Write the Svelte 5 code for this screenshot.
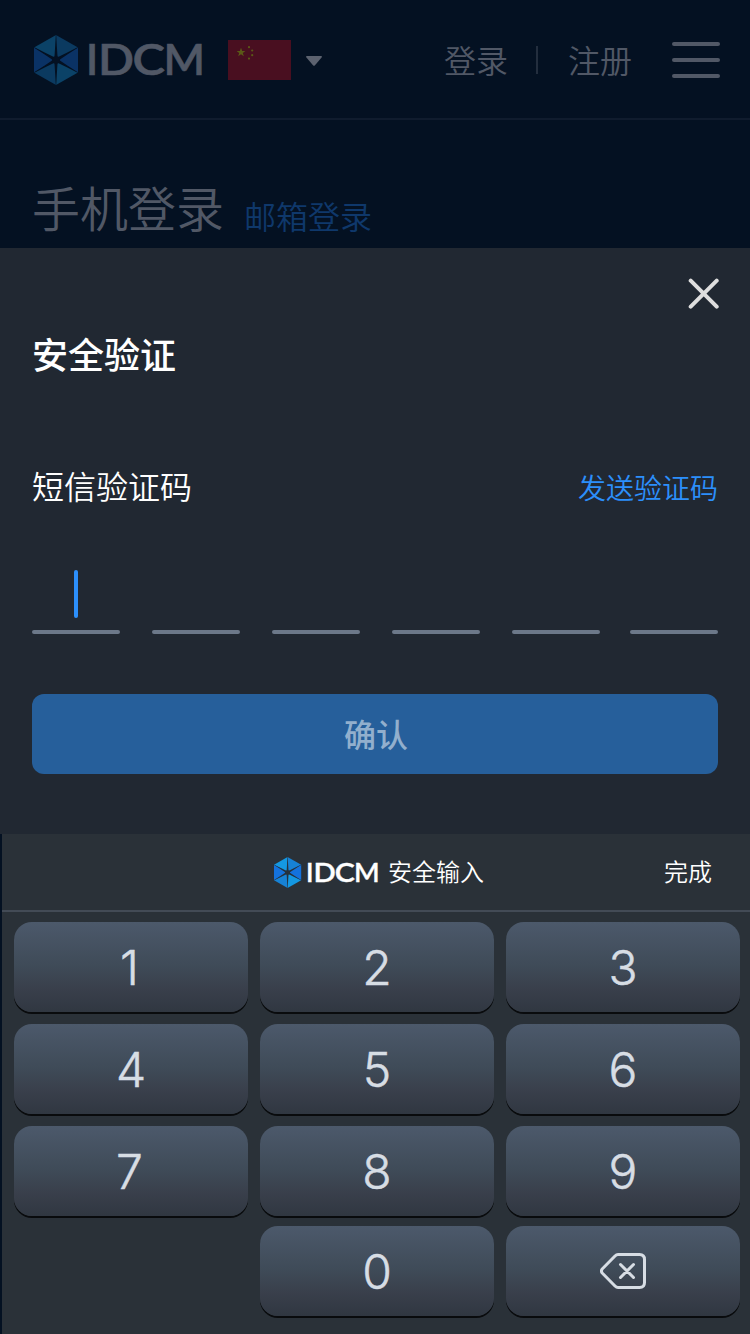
<script>
  const rows = [
    ['1', '2', '3'],
    ['4', '5', '6'],
    ['7', '8', '9'],
    ['', '0', 'del']
  ];
  const slots = [0, 1, 2, 3, 4, 5];
  const spokes = [0, 60, 120, 180, 240, 300];
</script>

{#snippet logo(cls)}
  <svg class={cls} viewBox="0 0 170 50">
    <polygon class="top" points="22,0 0,12.5 22,25" />
    <polygon class="top b" points="22,0 44,12.5 22,25" />
    <polygon class="side" points="0,12.5 0,37.5 22,25" />
    <polygon class="side" points="44,12.5 44,37.5 22,25" />
    <polygon class="top b" points="22,50 0,37.5 22,25" />
    <polygon class="top" points="22,50 44,37.5 22,25" />
    <g class="cut">
      {#each spokes as a}
        <polygon points="21.8,0 22.2,0 22.9,12 23.4,20 24,25 20,25 20.6,20 21.1,12" transform="rotate({a} 22 25)" />
      {/each}
      <circle cx="22" cy="25" r="3.8" />
    </g>
    <g class="word">
      <text x="52" y="40">I</text>
      <text x="64" y="40" textLength="36" lengthAdjust="spacingAndGlyphs">D</text>
      <text x="98.5" y="40" textLength="32.5" lengthAdjust="spacingAndGlyphs">C</text>
      <text x="129.5" y="40" textLength="41.5" lengthAdjust="spacingAndGlyphs">M</text>
    </g>
  </svg>
{/snippet}

<div class="screen">
  <header>
    {@render logo('logo dim')}
    <svg class="flag" viewBox="0 0 63 40">
      <rect width="63" height="40" />
      <polygon points="13,7.8 14.2,11 17.4,11 14.8,13 15.8,16.2 13,14.3 10.2,16.2 11.2,13 8.6,11 11.8,11" />
      <circle cx="21" cy="7.2" r="1.1" /><circle cx="24.2" cy="10.5" r="1.1" />
      <circle cx="24.2" cy="15.2" r="1.1" /><circle cx="21" cy="18.6" r="1.1" />
    </svg>
    <svg class="caret" viewBox="0 0 16 10"><path d="M0.8 0h14.4q1.2.4.4 1.5L9 9.2q-1 1-2 0L.4 1.5Q-.4.4.8 0z" /></svg>
    <span class="nav first">登录</span>
    <i class="bar"></i>
    <span class="nav">注册</span>
    <div class="menu"><i></i><i></i><i></i></div>
  </header>

  <div class="tabs">
    <span class="phone">手机登录</span>
    <span class="mail">邮箱登录</span>
  </div>

  <section class="sheet">
    <div class="close">
      <svg viewBox="0 0 32 32"><path d="M2.7 2.7l26 26M28.7 2.7L2.7 28.7" /></svg>
    </div>
    <h1>安全验证</h1>
    <div class="field">
      <span class="label">短信验证码</span>
      <span class="send">发送验证码</span>
    </div>
    <div class="code">
      {#each slots as n}
        <div class="slot">{#if n === 0}<i></i>{/if}</div>
      {/each}
    </div>
    <div class="confirm">确认</div>
  </section>

  <section class="keyboard">
    <div class="toolbar">
      <div class="brand">
        {@render logo('logo small')}
        <span>安全输入</span>
      </div>
      <span class="done">完成</span>
    </div>
    <div class="keys">
      {#each rows as row}
        <div class="row">
          {#each row as k}
            {#if k === ''}
              <div></div>
            {:else if k === 'del'}
              <div class="key">
                <svg class="back" viewBox="0 0 46 36">
                  <path d="M18 1.5H39.5Q44.5 1.5 44.5 6.5V29.5Q44.5 34.5 39.5 34.5H18Q16.5 34.5 15 33L2.2 20Q.6 18 2.2 16L15 3Q16.5 1.5 18 1.5z" />
                  <path d="M20.5 11.5l13 13M33.5 11.5l-13 13" />
                </svg>
              </div>
            {:else}
              <div class="key" class:narrow={k === '1' || k === '7'}>{k}</div>
            {/if}
          {/each}
        </div>
      {/each}
    </div>
  </section>
</div>

<style>
  :global(body) { margin: 0; background: #041122; }
  * { box-sizing: border-box; }
  .screen {
    width: 750px;
    height: 1334px;
    overflow: hidden;
    display: flex;
    flex-direction: column;
    background: #041122;
    font-family: "Noto Sans CJK SC", sans-serif;
    color: #fff;
  }
  svg { display: block; flex: none; }
  header {
    height: 120px;
    flex: none;
    display: flex;
    align-items: center;
    padding: 0 30px 0 34px;
    border-bottom: 2px solid #101c2e;
    color: #515866;
  }
  .logo { width: 170px; height: 50px; margin-top: 2px; }
  .word { font-family: Lato, sans-serif; font-weight: 600; font-size: 42px; fill: #515866; stroke: #515866; stroke-width: 0.6; }
  .logo .top { fill: #0b4267; }
  .logo .top.b { fill: #0b3a60; }
  .logo .side { fill: #0a3265; }
  .logo .cut { fill: #041122; }
  .flag { width: 63px; height: 40px; margin: 2px 0 0 24px; fill: #5b5917; }
  .flag rect { fill: #490f20; }
  .caret { width: 16px; height: 10px; margin: 4px 0 0 15px; fill: #5c626f; }
  .nav { font-size: 32px; line-height: 48px; font-weight: 350; width: 64px; white-space: nowrap; padding-bottom: 1px; }
  .nav.first { margin-left: 122px; }
  .bar { width: 2px; height: 28px; margin: 2px 30px 0 28px; background: #232e3e; }
  .menu { margin: 2px 0 0 auto; width: 48px; height: 36px; display: flex; flex-direction: column; justify-content: space-between; }
  .menu i { height: 4px; border-radius: 2px; background: #515866; }

  .tabs { height: 128px; flex: none; display: flex; align-items: flex-start; padding: 50px 32px 0; }
  .phone { font-size: 48px; line-height: 72px; font-weight: 350; color: #515866; }
  .mail { font-size: 32px; line-height: 48px; font-weight: 350; color: #0f386b; margin: 21px 0 0 20px; }

  .sheet { height: 586px; flex: none; background: #212832; padding: 30px 32px 0; }
  .close { display: flex; justify-content: flex-end; margin-right: -2px; }
  .close svg { width: 32px; height: 32px; fill: none; stroke: #dedede; stroke-width: 4; stroke-linecap: round; }
  h1 { margin: 17px 0 0; font-size: 36px; line-height: 52px; font-weight: 500; }
  .field { display: flex; justify-content: space-between; align-items: center; height: 48px; margin-top: 82px; }
  .label { font-size: 32px; font-weight: 350; line-height: 48px; }
  .send { font-size: 28px; font-weight: 350; line-height: 42px; color: #2c8ffb; padding: 3px 0 0 0; }
  .code { display: flex; gap: 32px; margin-top: 61px; height: 64px; }
  .slot { flex: none; width: 88px; height: 64px; display: flex; flex-direction: column; }
  .slot:last-child { margin-left: -2px; }
  .slot::after { content: ""; margin-top: auto; height: 4px; border-radius: 2px; background: #6c7889; }
  .slot i { width: 4px; height: 48px; margin-left: 42px; border-radius: 2px; background: #2c8ffb; }
  .confirm { margin-top: 60px; height: 80px; border-radius: 12px; background: #265f9b; color: #92afcd; font-size: 32px; font-weight: 500; line-height: 79px; text-align: center; text-indent: 2px; }

  .keyboard { height: 500px; flex: none; margin-left: 2px; background: #2a3138; }
  .toolbar { height: 78px; display: grid; grid-template-columns: 1fr auto; align-items: center; padding: 0 38px 0 272px; border-bottom: 2px solid #434b56; font-size: 24px; font-weight: 350; line-height: 36px; }
  .toolbar span { padding-bottom: 3px; }
  .brand { display: flex; align-items: center; }
  .logo.small { width: 105px; height: 31px; margin: 0 9px 0 0; }
  .small .word { fill: #fff; stroke: #fff; }
  .small .top { fill: #1498e2; }
  .small .top.b { fill: #1782d5; }
  .small .side { fill: #1472dd; }
  .small .cut { fill: #26313c; }
  .keys { padding: 10px 10px 0 12px; }
  .row { display: grid; grid-template-columns: repeat(3, 234px); column-gap: 12px; margin-bottom: 12px; }
  .row:nth-child(3) { margin-bottom: 10px; }
  .key {
    height: 90px;
    border-radius: 18px;
    background: linear-gradient(#4c596b, #3f4b58 48%, #393f4b 75%, #303741);
    box-shadow: 0 2px 0 #090b0d;
    display: flex;
    justify-content: center;
    align-items: center;
    font-family: Inter, sans-serif;
    font-size: 48px;
    font-weight: 300;
    -webkit-text-stroke: 0.5px #d7dde4;
    color: #d7dde4;
  }
  .key.narrow { padding-right: 3px; }
  .back { width: 46px; height: 36px; fill: none; stroke: #d7dde4; stroke-width: 3; stroke-linecap: round; stroke-linejoin: round; }
</style>
